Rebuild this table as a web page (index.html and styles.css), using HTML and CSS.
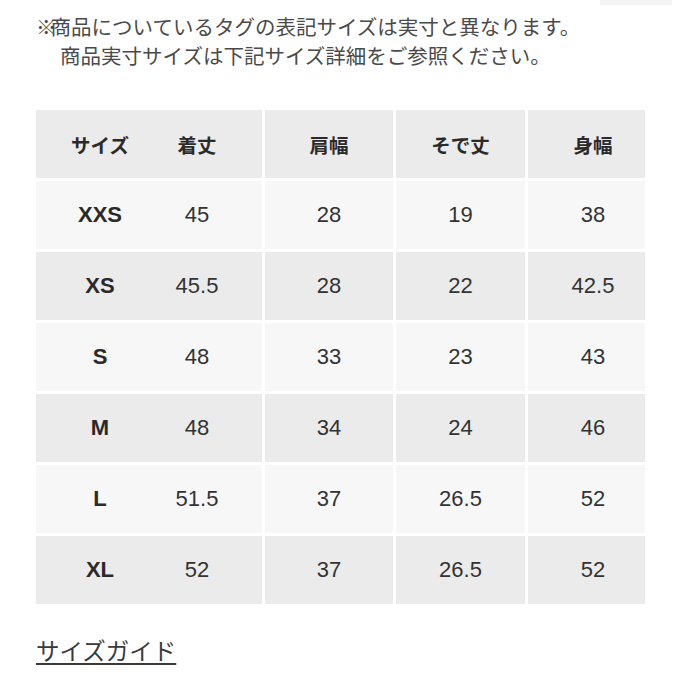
FILE: index.html
```html
<!DOCTYPE html>
<html lang="ja">
<head>
<meta charset="utf-8">
<link rel="stylesheet" href="styles.css">
</head>
<body>
<div class="page">
  <div class="strip"><div class="strip-block"></div></div>
  <div class="notes">
    <p class="note"><span class="mark">※</span>商品についているタグの表記サイズは実寸と異なります。</p>
    <p class="note note-indent">商品実寸サイズは下記サイズ詳細をご参照ください。</p>
  </div>
  <div class="table">
    <div class="row head">
      <div class="cell first"><span class="size">サイズ</span><span class="len">着丈</span></div>
      <div class="cell">肩幅</div>
      <div class="cell">そで丈</div>
      <div class="cell last">身幅</div>
    </div>
    <div class="row light">
      <div class="cell first"><span class="size">XXS</span><span class="len">45</span></div>
      <div class="cell">28</div>
      <div class="cell">19</div>
      <div class="cell last">38</div>
    </div>
    <div class="row grey">
      <div class="cell first"><span class="size">XS</span><span class="len">45.5</span></div>
      <div class="cell">28</div>
      <div class="cell">22</div>
      <div class="cell last">42.5</div>
    </div>
    <div class="row light">
      <div class="cell first"><span class="size">S</span><span class="len">48</span></div>
      <div class="cell">33</div>
      <div class="cell">23</div>
      <div class="cell last">43</div>
    </div>
    <div class="row grey">
      <div class="cell first"><span class="size">M</span><span class="len">48</span></div>
      <div class="cell">34</div>
      <div class="cell">24</div>
      <div class="cell last">46</div>
    </div>
    <div class="row light">
      <div class="cell first"><span class="size">L</span><span class="len">51.5</span></div>
      <div class="cell">37</div>
      <div class="cell">26.5</div>
      <div class="cell last">52</div>
    </div>
    <div class="row grey">
      <div class="cell first"><span class="size">XL</span><span class="len">52</span></div>
      <div class="cell">37</div>
      <div class="cell">26.5</div>
      <div class="cell last">52</div>
    </div>
  </div>
  <a class="guide" href="#">サイズガイド</a>
</div>
</body>
</html>
```
FILE: styles.css
```css
html, body {
  margin: 0;
  padding: 0;
  background: #ffffff;
}

.page {
  width: 681px;
  height: 681px;
  box-sizing: border-box;
  padding-left: 36px;
  font-family: "Noto Sans CJK JP", "Noto Sans", sans-serif;
  color: #333333;
  overflow: hidden;
}

.strip {
  display: flex;
  justify-content: flex-end;
  height: 5px;
  padding-right: 9px;
}

.strip-block {
  width: 72px;
  height: 5px;
  background: #f4f4f4;
}

.notes {
  margin-top: 7px;
}

.note {
  margin: 0;
  font-size: 20.5px;
  line-height: 29px;
  font-weight: 400;
  color: #4a4a4a;
  white-space: nowrap;
}

.mark {
  letter-spacing: -6px;
}

.note-indent {
  padding-left: 24px;
}

.table {
  margin-top: 40px;
  width: 609px;
  display: flex;
  flex-direction: column;
  gap: 3px;
}

.row {
  display: grid;
  grid-template-columns: 226px 128px 129px 117px;
  column-gap: 3px;
  height: 68px;
}

.cell {
  display: flex;
  align-items: center;
  justify-content: center;
  font-family: "Liberation Sans", Arial, "Noto Sans CJK JP", sans-serif;
  font-size: 22px;
  color: #333333;
}

.first {
  justify-content: flex-start;
}

.last {
  padding-left: 13px;
}

.size {
  width: 128px;
  text-align: center;
  font-weight: bold;
  color: #2a2a2a;
}

.len {
  width: 66px;
  text-align: center;
}

.head .cell {
  font-family: "Noto Sans CJK JP", sans-serif;
  font-size: 19.5px;
  font-weight: bold;
  color: #2a2a2a;
}

.head .len {
  font-weight: bold;
}

.head .cell,
.grey .cell {
  background: #ebebeb;
}

.light .cell {
  background: #f7f7f7;
}

.guide {
  display: inline-block;
  margin-top: 31px;
  font-size: 23.5px;
  line-height: 30px;
  font-weight: 400;
  color: #3a3a3a;
  text-decoration: underline;
  text-decoration-thickness: 1.5px;
  text-underline-offset: 3px;
  white-space: nowrap;
}
```
